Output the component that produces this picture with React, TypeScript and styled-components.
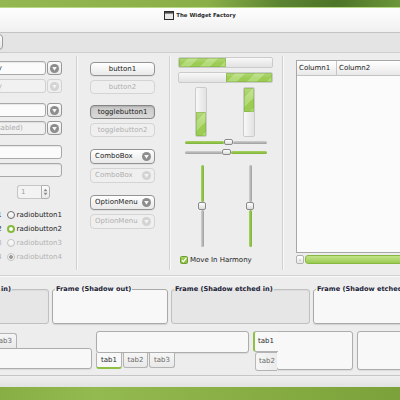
import styled, { createGlobalStyle } from "styled-components";

const GlobalStyle = createGlobalStyle`
  html, body {
    margin: 0;
    padding: 0;
  }
  body {
    font-family: "DejaVu Sans", "Liberation Sans", sans-serif;
    font-size: 7px;
    line-height: 9px;
    color: #262626;
  }
  #root {
    width: 400px;
    height: 400px;
    overflow: hidden;
  }
`;

const Desktop = styled.div`
  width: 400px;
  height: 400px;
  overflow: hidden;
  padding-top: 8px;
  box-sizing: border-box;
  background:
    linear-gradient(100deg, #94b752 0%, #8aae48 52%, #5b8431 70%, #4d7428 84%, #6c9739 100%) top / 100% 8px no-repeat,
    linear-gradient(100deg, #7fa63d 0%, #93b951 35%, #88ae45 65%, #7ba23a 100%);
`;

const Window = styled.div`
  margin-left: -80px;
  width: 560px;
  height: 379px;
  display: flex;
  flex-direction: column;
  background: #ededed;
  box-shadow: 0 -1px 0 #b8d884;
`;

const TitleBar = styled.header`
  flex: none;
  height: 21px;
  padding-top: 3px;
  display: flex;
  justify-content: center;
  align-items: flex-start;
  gap: 2px;
  background: linear-gradient(#fefefe, #f0f0f0);
  border-bottom: 1px solid #c3c3c3;
`;

const Title = styled.span`
  font-size: 5.4px;
  line-height: 8px;
  font-weight: bold;
  color: #2a2a2a;
`;

const Toolbar = styled.div`
  flex: none;
  height: 19px;
  display: flex;
  align-items: flex-start;
  background: #e4e4e4;
  border-bottom: 1px solid #cdcdcd;
`;

const ToolButton = styled.div`
  margin: 1px 0 0 57px;
  width: 26px;
  height: 16px;
  box-sizing: border-box;
  border: 1px solid #9a9a9a;
  border-radius: 4px;
  background: linear-gradient(#fdfdfd, #e6e6e6);
`;

const Main = styled.div`
  flex: none;
  height: 222px;
  display: flex;
  border-bottom: 1px solid #d0d0d0;
  box-shadow: 0 1px 0 #fafafa;
`;

const Sep = styled.div`
  flex: none;
  width: 1px;
  margin: 3px 0 5px;
  background: #d0d0d0;
  box-shadow: 1px 0 0 #f9f9f9;
`;

const Column = styled.div<{ $w?: number; $pad: string }>`
  flex: ${p => (p.$w ? "none" : "1")};
  width: ${p => (p.$w ? `${p.$w}px` : "auto")};
  padding: ${p => p.$pad};
  box-sizing: border-box;
  display: flex;
  flex-direction: column;
  overflow: hidden;
`;

const Group = styled.div<{ $top?: number; $gap?: number }>`
  display: flex;
  flex-direction: column;
  gap: ${p => p.$gap ?? 4}px;
  margin-top: ${p => p.$top ?? 0}px;
`;

/* entries and combos */

const EntryRow = styled.div`
  display: flex;
  gap: 1px;
  height: 14px;
`;

const Entry = styled.div<{ $disabled?: boolean; $dimText?: boolean }>`
  flex: 1;
  height: 14px;
  box-sizing: border-box;
  padding-left: 3px;
  border: 1px solid ${p => (p.$disabled ? "#d0d0d0" : "#a8a8a8")};
  border-radius: 3px;
  background: ${p => (p.$disabled || p.$dimText ? "#f1f1f1" : "#fbfbfb")};
  box-shadow: ${p => (p.$disabled ? "none" : "inset 0 1px 1px rgba(0,0,0,0.08)")};
  color: ${p => (p.$disabled || p.$dimText ? "#a9a9a9" : "#222")};
  line-height: 12px;
  white-space: nowrap;
  overflow: hidden;
`;

const IconButton = styled.div<{ $disabled?: boolean }>`
  flex: none;
  width: 15px;
  height: 14px;
  box-sizing: border-box;
  display: flex;
  align-items: center;
  justify-content: center;
  border: 1px solid ${p => (p.$disabled ? "#d2d2d2" : "#979797")};
  border-radius: 3px;
  background: ${p => (p.$disabled ? "#efefef" : "linear-gradient(#fdfdfd, #e8e8e8)")};
`;

const DropIcon = ({ disabled }: { disabled?: boolean }) => (
  <svg width="9" height="9" viewBox="0 0 9 9">
    <circle cx="4.5" cy="4.5" r="4.5" fill={disabled ? "#d3d3d3" : "#8d8d8d"} />
    <path d="M2.2 3 H6.8 L4.5 6.8 Z" fill={disabled ? "#f3f3f3" : "#f6f6f6"} />
  </svg>
);

const ComboEntry = ({ text, disabled, dimText }: { text: string; disabled?: boolean; dimText?: boolean }) => (
  <EntryRow>
    <Entry $disabled={disabled} $dimText={dimText}>{text}</Entry>
    <IconButton $disabled={disabled}>
      <DropIcon disabled={disabled} />
    </IconButton>
  </EntryRow>
);

const Spin = styled.div`
  align-self: flex-end;
  margin-right: 12px;
  display: flex;
  height: 14px;
`;

const SpinField = styled.div`
  width: 24px;
  box-sizing: border-box;
  padding-left: 3px;
  border: 1px solid #c6c6c6;
  border-right: none;
  border-radius: 3px 0 0 3px;
  background: #f3f3f3;
  color: #a0a0a0;
  line-height: 12px;
`;

const SpinArrows = styled.div`
  width: 9px;
  box-sizing: border-box;
  display: flex;
  align-items: center;
  justify-content: center;
  border: 1px solid #b0b0b0;
  border-radius: 0 3px 3px 0;
  background: linear-gradient(#fbfbfb, #e9e9e9);
`;

/* check and radio */

const ToggleRow = styled.div`
  display: flex;
  align-items: center;
  justify-content: flex-end;
  height: 14px;
  white-space: nowrap;
`;

const Label = styled.span<{ $dim?: boolean }>`
  color: ${p => (p.$dim ? "#b2b2b2" : "#222")};
  line-height: 9px;
`;

type RadioState = "off" | "on" | "mixed";

const Radio = styled.span<{ $state: RadioState; $dim?: boolean }>`
  flex: none;
  width: 8px;
  height: 8px;
  box-sizing: border-box;
  margin: 0 2px 0 5px;
  border-radius: 50%;
  border: ${p =>
    p.$state === "on" ? "2px solid #86ba3e" : `1px solid ${p.$dim ? "#c3c3c3" : "#6e6e6e"}`};
  background: ${p =>
    p.$state === "mixed"
      ? "radial-gradient(circle, #9d9d9d 0 1.6px, #f4f4f4 2.2px)"
      : p.$state === "on"
        ? "#fdfdfd"
        : "linear-gradient(#ffffff, #ececec)"};
`;

const CheckBox = styled.span<{ $checked?: boolean; $dim?: boolean }>`
  flex: none;
  width: 8px;
  height: 8px;
  box-sizing: border-box;
  margin-right: 2px;
  display: inline-flex;
  align-items: center;
  justify-content: center;
  border-radius: 1.5px;
  border: 1px solid ${p => (p.$checked ? "#6c9d2d" : p.$dim ? "#c6c6c6" : "#777")};
  background: ${p => (p.$checked ? "linear-gradient(#a5d25f, #86bb3c)" : "linear-gradient(#fff, #ececec)")};
`;

const Tick = () => (
  <svg width="6" height="6" viewBox="0 0 6 6">
    <path d="M0.8 3.1 L2.4 4.7 L5.3 1.1" fill="none" stroke="#fff" strokeWidth="1.3" />
  </svg>
);

/* buttons */

const Button = styled.div<{ $disabled?: boolean; $pressed?: boolean; $h?: number }>`
  width: 65px;
  height: ${p => p.$h ?? 14}px;
  box-sizing: border-box;
  display: flex;
  align-items: center;
  justify-content: center;
  border-radius: 4px;
  border: 1px solid ${p => (p.$disabled ? "#d4d4d4" : p.$pressed ? "#858585" : "#939393")};
  background: ${p =>
    p.$disabled
      ? "#efefef"
      : p.$pressed
        ? "linear-gradient(#c9c9c9, #dadada)"
        : "linear-gradient(#ffffff, #e9e9e9)"};
  box-shadow: ${p => (p.$pressed ? "inset 0 1px 2px rgba(0,0,0,0.15)" : p.$disabled ? "none" : "0 1px 0 rgba(0,0,0,0.06)")};
  color: ${p => (p.$disabled ? "#b0b0b0" : "#222")};
  white-space: nowrap;
`;

const ComboButton = styled(Button)`
  justify-content: space-between;
  padding: 0 3px 0 4px;
`;

/* progress bars and scales */

const Trough = styled.div<{ $vertical?: boolean; $end?: boolean }>`
  flex: none;
  display: flex;
  flex-direction: ${p => (p.$vertical ? "column" : "row")};
  justify-content: ${p => (p.$end ? "flex-end" : "flex-start")};
  width: ${p => (p.$vertical ? "12px" : "95px")};
  height: ${p => (p.$vertical ? "50px" : "11px")};
  box-sizing: border-box;
  border: 1px solid #cbcbcb;
  border-radius: 2px;
  background: linear-gradient(${p => (p.$vertical ? "90deg" : "180deg")}, #f8f8f8, #e2e2e2);
  overflow: hidden;
`;

const Fill = styled.div`
  flex: none;
  background:
    linear-gradient(rgba(255, 255, 255, 0.22), rgba(255, 255, 255, 0) 55%),
    repeating-linear-gradient(135deg, #9dcc55 0 7px, #b4db79 7px 14px);
  box-shadow: inset 0 0 0 1px rgba(110, 160, 50, 0.35);
`;

const VBars = styled.div`
  display: flex;
  gap: 36px;
  padding-left: 17px;
  margin-top: 4px;
`;

const HScale = styled.div<{ $top: number }>`
  display: flex;
  align-items: center;
  width: 82px;
  height: 8px;
  margin: ${p => p.$top}px 0 0 7px;
`;

const VScales = styled.div`
  display: flex;
  gap: 40px;
  padding-left: 20px;
  margin-top: 9px;
`;

const VScale = styled.div`
  display: flex;
  flex-direction: column;
  align-items: center;
  width: 8px;
  height: 82px;
`;

const Track = styled.div<{ $on?: boolean; $vertical?: boolean }>`
  flex: none;
  ${p => (p.$vertical ? "width: 3px;" : "height: 3px;")}
  border-radius: 2px;
  background: ${p =>
    p.$on
      ? `linear-gradient(${p.$vertical ? "90deg" : "180deg"}, #a7d262, #7db236)`
      : `linear-gradient(${p.$vertical ? "90deg" : "180deg"}, #d0d0d0, #9e9e9e)`};
`;

const Thumb = styled.div<{ $vertical?: boolean }>`
  flex: none;
  width: ${p => (p.$vertical ? "8px" : "9px")};
  height: ${p => (p.$vertical ? "8px" : "6px")};
  box-sizing: border-box;
  border: 1px solid #8a8a8a;
  border-radius: 2px;
  background: linear-gradient(#ffffff, #dcdcdc);
`;

const HarmonyRow = styled.div`
  display: flex;
  align-items: center;
  height: 10px;
  margin-top: 8px;
  padding-left: 2px;
`;

/* tree view */

const Tree = styled.div`
  width: 170px;
  height: 193px;
  box-sizing: border-box;
  display: flex;
  flex-direction: column;
  border: 1px solid #a7a7a7;
  background: #fbfbfb;
`;

const TreeHeader = styled.div`
  flex: none;
  display: flex;
  height: 14px;
  border-bottom: 1px solid #c4c4c4;
  background: linear-gradient(#ffffff, #e9e9e9);
`;

const HeaderCell = styled.div<{ $w?: number }>`
  flex: ${p => (p.$w ? "none" : "1")};
  width: ${p => (p.$w ? `${p.$w}px` : "auto")};
  padding-left: 2px;
  border-right: 1px solid #c6c6c6;
  line-height: 14px;
  color: #222;
`;

const Scrollbar = styled.div`
  display: flex;
  gap: 1px;
  width: 170px;
  height: 9px;
  margin-top: 2px;
`;

const ScrollArrow = styled.div`
  flex: none;
  width: 8px;
  box-sizing: border-box;
  display: flex;
  align-items: center;
  justify-content: center;
  border: 1px solid #b2b2b2;
  border-radius: 2px;
  background: linear-gradient(#ffffff, #e8e8e8);
  color: #777;
  font-size: 6px;
`;

const ScrollThumb = styled.div`
  flex: 1;
  border-radius: 3px;
  border: 1px solid #88b840;
  background: linear-gradient(#c2e38a, #9bcb52);
`;

/* frames */

const FramesRow = styled.div`
  flex: none;
  display: flex;
  gap: 3px;
  height: 48px;
  padding: 9px 0 0 17px;
  box-sizing: border-box;
`;

const Frame = styled.fieldset<{ $w: number; $sunken?: boolean }>`
  flex: none;
  margin: 0;
  padding: 0;
  min-width: 0;
  width: ${p => p.$w}px;
  height: 39px;
  box-sizing: border-box;
  border: 1px solid ${p => (p.$sunken ? "#c0c0c0" : "#a9a9a9")};
  border-radius: 3px;
  background: ${p => (p.$sunken ? "#e6e6e6" : "#f8f8f8")};
  box-shadow: ${p => (p.$sunken ? "inset 0 1px 1px rgba(0,0,0,0.05)" : "0 1px 1px rgba(0,0,0,0.12)")};
`;

const FrameLabel = styled.legend`
  margin-left: 2px;
  padding: 0 1px;
  font-size: 6.6px;
  line-height: 8px;
  font-weight: bold;
  color: #1d2438;
  white-space: nowrap;
`;

/* notebooks */

const NotebookRow = styled.div`
  flex: none;
  display: flex;
  align-items: flex-start;
  gap: 4px;
  height: 51px;
  padding: 7px 0 0 17px;
  box-sizing: border-box;
`;

const Notebook = styled.div<{ $w: number; $side?: boolean }>`
  flex: none;
  width: ${p => p.$w}px;
  display: flex;
  flex-direction: ${p => (p.$side ? "row" : "column")};
`;

const TabStrip = styled.div<{ $bottom?: boolean }>`
  display: flex;
  align-items: ${p => (p.$bottom ? "flex-start" : "flex-end")};
  gap: ${p => (p.$bottom ? "1px" : "0")};
  height: ${p => (p.$bottom ? "auto" : "17px")};
  padding-left: ${p => (p.$bottom ? "0" : "2px")};
`;

const Tab = styled.div<{ $active?: boolean; $bottom?: boolean; $w?: number }>`
  flex: none;
  width: ${p => p.$w ?? 26}px;
  height: ${p => (p.$active ? 16 : 15)}px;
  box-sizing: border-box;
  display: flex;
  align-items: center;
  justify-content: center;
  border: 1px solid #b3b3b3;
  ${p => (p.$bottom ? "border-top: none;" : "border-bottom: none;")}
  ${p => (p.$bottom && p.$active ? "border-bottom: 2px solid #8ec044;" : "")}
  border-radius: ${p => (p.$bottom ? "0 0 3px 3px" : "3px 3px 0 0")};
  background: ${p => (p.$active ? "#f8f8f8" : "linear-gradient(#f6f6f6, #e9e9e9)")};
  color: ${p => (p.$active ? "#2a2a2a" : "#6a6a6a")};
`;

const SideTabs = styled.div`
  flex: none;
  width: 24px;
  display: flex;
  flex-direction: column;
  align-items: flex-end;
  position: relative;
  z-index: 1;
  margin-right: -1px;
`;

const SideTab = styled.div<{ $active?: boolean }>`
  width: ${p => (p.$active ? 25 : 22)}px;
  height: ${p => (p.$active ? 21 : 19)}px;
  box-sizing: border-box;
  padding-left: 3px;
  display: flex;
  align-items: center;
  border: 1px solid #b3b3b3;
  border-right: none;
  border-left: ${p => (p.$active ? "2px solid #8ec044" : "1px solid #b8b8b8")};
  border-radius: 3px 0 0 3px;
  background: ${p => (p.$active ? "#f8f8f8" : "linear-gradient(90deg, #f6f6f6, #ebebeb)")};
  color: ${p => (p.$active ? "#2a2a2a" : "#6a6a6a")};
  margin-right: ${p => (p.$active ? "-1px" : "0")};
`;

const Page = styled.div<{ $h: number; $grow?: boolean }>`
  flex: ${p => (p.$grow ? "1" : "none")};
  height: ${p => p.$h}px;
  box-sizing: border-box;
  border: 1px solid #adadad;
  border-radius: 3px;
  background: #f8f8f8;
  box-shadow: 0 1px 1px rgba(0, 0, 0, 0.08);
`;

const StatusBar = styled.div`
  flex: 1;
  border-top: 1px solid #c6c6c6;
  background: linear-gradient(#efefef, #e2e2e2);
`;

const WindowIcon = () => (
  <svg width="10" height="9" viewBox="0 0 10 9">
    <rect x="0.5" y="0.5" width="9" height="8" fill="#e9e9e9" stroke="#2c2c2c" />
    <rect x="1" y="1" width="8" height="1.6" fill="#4a4a4a" />
  </svg>
);

const SpinIcon = () => (
  <svg width="5" height="8" viewBox="0 0 5 8">
    <path d="M0.5 3.2 L2.5 0.8 L4.5 3.2 Z M0.5 4.8 L2.5 7.2 L4.5 4.8 Z" fill="#8a8a8a" />
  </svg>
);

const toggles: { n: number; radio: RadioState; dim: boolean }[] = [
  { n: 1, radio: "off", dim: false },
  { n: 2, radio: "on", dim: false },
  { n: 3, radio: "off", dim: true },
  { n: 4, radio: "mixed", dim: true },
];

const App = () => (
  <>
    <GlobalStyle />
    <Desktop>
      <Window>
        <TitleBar>
          <WindowIcon />
          <Title>The Widget Factory</Title>
        </TitleBar>
        <Toolbar>
          <ToolButton />
        </Toolbar>

        <Main>
          <Column $w={156} $pad="8px 14px 0 43px">
            <Group>
              <ComboEntry text="Text entry" />
              <ComboEntry text="Text entry" disabled />
            </Group>
            <Group $top={10}>
              <ComboEntry text="" />
              <ComboEntry text="Entry (disabled)" dimText />
            </Group>
            <Group $top={10}>
              <EntryRow>
                <Entry />
              </EntryRow>
              <EntryRow>
                <Entry $dimText />
              </EntryRow>
            </Group>
            <Group $top={8}>
              <Spin>
                <SpinField>1</SpinField>
                <SpinArrows>
                  <SpinIcon />
                </SpinArrows>
              </Spin>
            </Group>
            <Group $top={9} $gap={0}>
              {toggles.map(t => (
                <ToggleRow key={t.n}>
                  <CheckBox $dim={t.dim} />
                  <Label $dim={t.dim}>checkbutton{t.n}</Label>
                  <Radio $state={t.radio} $dim={t.dim} />
                  <Label $dim={t.dim}>radiobutton{t.n}</Label>
                </ToggleRow>
              ))}
            </Group>
          </Column>
          <Sep />

          <Column $w={92} $pad="9px 13px 0">
            <Group>
              <Button>button1</Button>
              <Button $disabled>button2</Button>
            </Group>
            <Group $top={11}>
              <Button $pressed>togglebutton1</Button>
              <Button $disabled>togglebutton2</Button>
            </Group>
            <Group $top={12}>
              <ComboButton $h={15}>
                ComboBox
                <DropIcon />
              </ComboButton>
              <ComboButton $h={15} $disabled>
                ComboBox
                <DropIcon disabled />
              </ComboButton>
            </Group>
            <Group $top={12}>
              <ComboButton $h={15}>
                OptionMenu
                <DropIcon />
              </ComboButton>
              <ComboButton $h={15} $disabled>
                OptionMenu
                <DropIcon disabled />
              </ComboButton>
            </Group>
          </Column>
          <Sep />

          <Column $w={112} $pad="4px 9px 0 8px">
            <Group>
              <Trough>
                <Fill style={{ width: "50%" }} />
              </Trough>
              <Trough $end>
                <Fill style={{ width: "50%" }} />
              </Trough>
            </Group>
            <VBars>
              <Trough $vertical $end>
                <Fill style={{ height: "50%" }} />
              </Trough>
              <Trough $vertical>
                <Fill style={{ height: "50%" }} />
              </Trough>
            </VBars>
            <HScale $top={1}>
              <Track $on style={{ width: 39 }} />
              <Thumb />
              <Track style={{ flex: 1 }} />
            </HScale>
            <HScale $top={2}>
              <Track style={{ width: 37 }} />
              <Thumb />
              <Track $on style={{ flex: 1 }} />
            </HScale>
            <VScales>
              <VScale>
                <Track $vertical $on style={{ height: 37 }} />
                <Thumb $vertical />
                <Track $vertical style={{ flex: 1 }} />
              </VScale>
              <VScale>
                <Track $vertical style={{ height: 37 }} />
                <Thumb $vertical />
                <Track $vertical $on style={{ flex: 1 }} />
              </VScale>
            </VScales>
            <HarmonyRow>
              <CheckBox $checked>
                <Tick />
              </CheckBox>
              <Label>Move In Harmony</Label>
            </HarmonyRow>
          </Column>
          <Sep />

          <Column $pad="7px 0 0 13px">
            <Tree>
              <TreeHeader>
                <HeaderCell $w={37}>Column1</HeaderCell>
                <HeaderCell>Column2</HeaderCell>
              </TreeHeader>
            </Tree>
            <Scrollbar>
              <ScrollArrow>‹</ScrollArrow>
              <ScrollThumb />
            </Scrollbar>
          </Column>
        </Main>

        <FramesRow>
          <Frame $w={112} $sunken>
            <FrameLabel>Frame (Shadow in)</FrameLabel>
          </Frame>
          <Frame $w={116}>
            <FrameLabel>Frame (Shadow out)</FrameLabel>
          </Frame>
          <Frame $w={139} $sunken>
            <FrameLabel>Frame (Shadow etched in)</FrameLabel>
          </Frame>
          <Frame $w={118}>
            <FrameLabel>Frame (Shadow etched out)</FrameLabel>
          </Frame>
        </FramesRow>

        <NotebookRow>
          <Notebook $w={155}>
            <TabStrip>
              <Tab $active>tab1</Tab>
              <Tab>tab2</Tab>
              <Tab>tab3</Tab>
            </TabStrip>
            <Page $h={21} />
          </Notebook>
          <Notebook $w={153}>
            <Page $h={22} />
            <TabStrip $bottom>
              <Tab $bottom $active>tab1</Tab>
              <Tab $bottom $w={25}>tab2</Tab>
              <Tab $bottom>tab3</Tab>
            </TabStrip>
          </Notebook>
          <Notebook $w={100} $side>
            <SideTabs>
              <SideTab $active>tab1</SideTab>
              <SideTab>tab2</SideTab>
            </SideTabs>
            <Page $h={39} $grow />
          </Notebook>
          <Notebook $w={120}>
            <Page $h={39} />
          </Notebook>
        </NotebookRow>

        <StatusBar />
      </Window>
    </Desktop>
  </>
);

export default App;
